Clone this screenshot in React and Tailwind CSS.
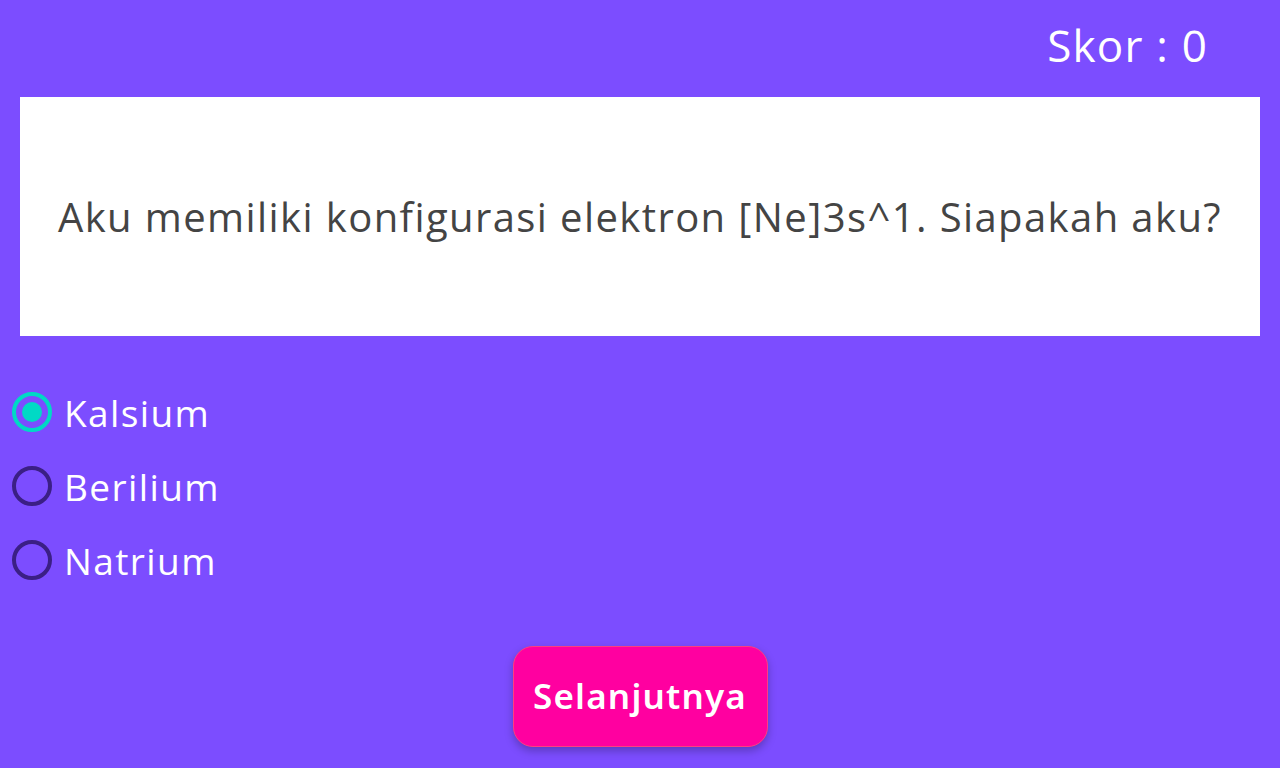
import React, { useState } from 'react';

const OPTIONS = ['Kalsium', 'Berilium', 'Natrium'];

export default function App() {
    const [selected, setSelected] = useState('Kalsium');

    return (
        <div className="min-h-screen w-full bg-[#7c4dff] flex flex-col" style={{ fontFamily: '"Open Sans", "Liberation Sans", sans-serif' }}>
            {/* skor */}
            <div className="h-[97px] flex items-center justify-end pr-[72px] pb-[8px]">
                <span className="text-white text-[44px] tracking-[1.2px] leading-none">Skor : 0</span>
            </div>

            {/* soal */}
            <div className="mx-5 h-[239px] bg-white flex items-center justify-center">
                <p className="text-[#444444] text-[40px] tracking-[1.4px] leading-none">
                    Aku memiliki konfigurasi elektron [Ne]3s^1. Siapakah aku?
                </p>
            </div>

            {/* pilihan */}
            <div className="flex flex-col gap-[34px] pl-3 mt-[56px]">
                {OPTIONS.map((opt) => {
                    const active = selected === opt;
                    return (
                        <label key={opt} className="flex items-center gap-3 cursor-pointer h-10" onClick={() => setSelected(opt)}>
                            <span className={`w-10 h-10 rounded-full border-4 flex items-center justify-center ${active ? 'border-[#00d9c5]' : 'border-[#3b1f85]'}`}>
                                {active && <span className="w-5 h-5 rounded-full bg-[#00d9c5]" />}
                            </span>
                            <span className="text-white text-[37px] tracking-[1.4px] leading-none">{opt}</span>
                        </label>
                    );
                })}
            </div>

            {/* tombol */}
            <div className="flex justify-center mt-[66px]">
                <button className="w-[255px] h-[101px] rounded-[20px] bg-[#ff00a0] border border-[#ff3d7f] shadow-[0_4px_8px_rgba(0,0,0,0.25)] text-white text-[35px] font-semibold tracking-[1.2px]" style={{ fontFamily: '"Noto Sans", sans-serif' }}>
                    Selanjutnya
                </button>
            </div>
        </div>
    );
}
